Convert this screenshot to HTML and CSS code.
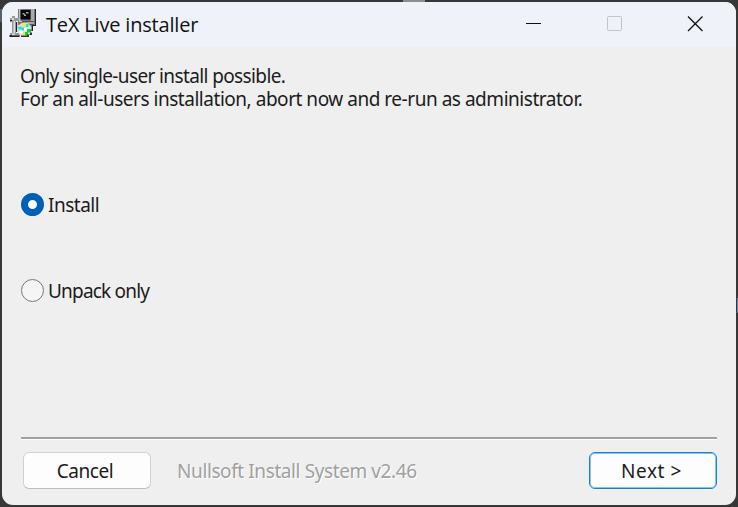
FILE: index.html
```
<!DOCTYPE html>
<html lang="en">
<head>
<meta charset="utf-8">
<title>TeX Live installer</title>
<link rel="stylesheet" href="styles.css">
</head>
<body>
<i class="behind behind-top"></i><i class="behind behind-left"></i><i class="behind behind-right"></i>
<main class="window">
  <header class="titlebar">
    <svg class="app-icon" width="28" height="28" viewBox="0 0 28 28">
      <path fill="#777" d="M9 0h17v17h-3v5h-9v-6H9z"/>
      <path fill="#c4c4c4" d="M10 0h1.500v12H24V0h1v13H10z"/>
      <path fill="#aaa" d="M22 0h3v16h-7v-3h4z"/>
      <path fill="#222" d="M26 0h1v17h-3v5h-3v-2h2v-4h3z"/>
      <path fill="#080808" d="M11.500 1h10v9.500h-10z"/>
      <path fill="#aaa" d="M13.500 4h2v1.500h1.500V7h-2V5.500h-1.500zM17 3h2.500v1.500H17z"/>
      <path fill="#555" d="M13 12h12v1H13zM18 15h7v1h-7z"/>
      <path fill="#999" d="M1 9h2V7h3v2h4v3H7v12h4v3H1v-3h2V12H1z"/>
      <path fill="#ddd" d="M3 9h2v2H3zM4.500 12h1.500v12H4.500zM3 24.500h3V26H3z"/>
      <path fill="#222" d="M.5 26H3v.5h7.500V28H.5zM7 13h1.200v10H7zM1 11h2v1.500H1z"/>
      <circle cx="15.500" cy="20.500" r="7" fill="#dedfdf"/>
      <path fill="#20dce8" d="M9.500 17.500h3v1h2.500v3h-2v-1H9.500zM17 15h2.500v3H17z"/>
      <path fill="#f2ed31" d="M13 14h3.500v4.500H14V16h-1zM14 23h3v3h-3z"/>
      <path fill="#12cd37" d="M18 20h4v3.500h-3V26h-3v-3h2z"/>
      <path fill="#fff" d="M10 22h4v2.500h-3zM15 19h2.500v2.500H15z"/>
      <path fill="#333" d="M12 26.500h6v-1h3v-2h2V26h-3v2h-8z"/>
    </svg>
    <h1 class="title">TeX Live installer</h1>
    <svg class="controls" width="180" height="18" viewBox="0 0 180 18" fill="none">
      <path stroke="#111" d="M1 8.500h15"/>
      <rect x="82.500" y="1.500" width="14" height="14" rx="1" stroke="#c3c4c9"/>
      <path stroke="#111" stroke-width="1.300" d="M163 1.500l14.500 14.500M177.500 1.500L163 16"/>
    </svg>
  </header>
  <section class="content">
    <p class="message line-one">Only single-user install possible.</p>
    <p class="message line-two">For an all-users installation, abort now and re-run as administrator.</p>
    <label class="option"><input class="radio" type="radio" name="mode" checked><span class="install">Install</span></label>
    <label class="option"><input class="radio" type="radio" name="mode"><span class="unpack">Unpack only</span></label>
  </section>
  <footer class="footer">
    <button class="button"><span class="cancel">Cancel</span></button>
    <span class="brand">Nullsoft Install System v2.46</span>
    <button class="button primary"><span class="next">Next &gt;</span></button>
  </footer>
</main>
</body>
</html>
```
FILE: styles.css
```
* { box-sizing: border-box; }
body {
  margin: 0;
  padding: 2px;
  height: 507px;
  overflow: hidden;
  background: #373737;
  font: 19px/23px "Noto Sans", "Open Sans", sans-serif;
  color: #1b1b20;
}
.window {
  height: 503px;
  display: flex;
  flex-direction: column;
  overflow: hidden;
  border-radius: 11px;
  background: #efefef;
}
.behind { position: absolute; }
.behind-top { left: 403px; top: 0; width: 22px; height: 2px; background: #8d8d8d; }
.behind-left { left: 0; top: 9px; width: 2px; height: 13px; background: #52616d; }
.behind-right { left: 737px; top: 298px; width: 1px; height: 15px; background: #6684ad; }
.titlebar {
  flex: 0 0 45px;
  display: flex;
  align-items: flex-start;
  padding: 7px 31px 0 7px;
  background: #f0f2f9;
}
.app-icon { flex: none; }
.title {
  margin: 2px 0 0 9px;
  font: 400 20px/28px "Open Sans", sans-serif;
  letter-spacing: -0.18px;
  color: #111;
  white-space: nowrap;
}
.controls { margin: 6px 0 0 auto; }
.content {
  flex: 1;
  padding: 18px 18px 0;
  white-space: nowrap;
}
.message { margin: 0; }
.line-one { letter-spacing: -0.62px; }
.line-two { margin-bottom: 81px; letter-spacing: -0.47px; }
.option {
  display: flex;
  align-items: center;
  height: 24px;
  margin-bottom: 62px;
}
.radio {
  appearance: none;
  width: 23px;
  height: 23px;
  margin: 0 4px 0 1px;
  border: 1.5px solid #777;
  border-radius: 50%;
  background: #f5f5f5;
}
.radio:checked { border: 7px solid #005fb8; background: #fff; }
.install, .unpack { padding-top: 2px; }
.install { letter-spacing: -0.5px; }
.unpack { letter-spacing: -0.8px; }
.cancel { letter-spacing: -0.4px; }
.next { letter-spacing: 0.6px; margin-right: 3px; }
.footer {
  height: 68px;
  margin: 0 19px;
  padding: 13px 0 0 2px;
  display: flex;
  align-items: flex-start;
  border-top: 2px solid #a0a0a0;
  box-shadow: inset 0 1px #fff;
}
.button {
  width: 128px;
  height: 37px;
  padding: 2px 4px 0 0;
  border: 1px solid #d0d0d0;
  border-bottom-color: #bdbdbd;
  border-radius: 6px;
  background: #fdfdfd;
  color: #1b1b20;
  font: inherit;
}
.primary {
  width: 128px;
  margin-left: auto;
  padding-right: 0;
  border: 1px solid #1880d2;
  box-shadow: inset 0 0 0 1px #8cc3ec;
}
.brand {
  margin: 8px 0 0 26px;
  color: #a0a0a0;
  text-shadow: 1px 1px #fff;
  letter-spacing: -0.4px;
  white-space: nowrap;
}
```
